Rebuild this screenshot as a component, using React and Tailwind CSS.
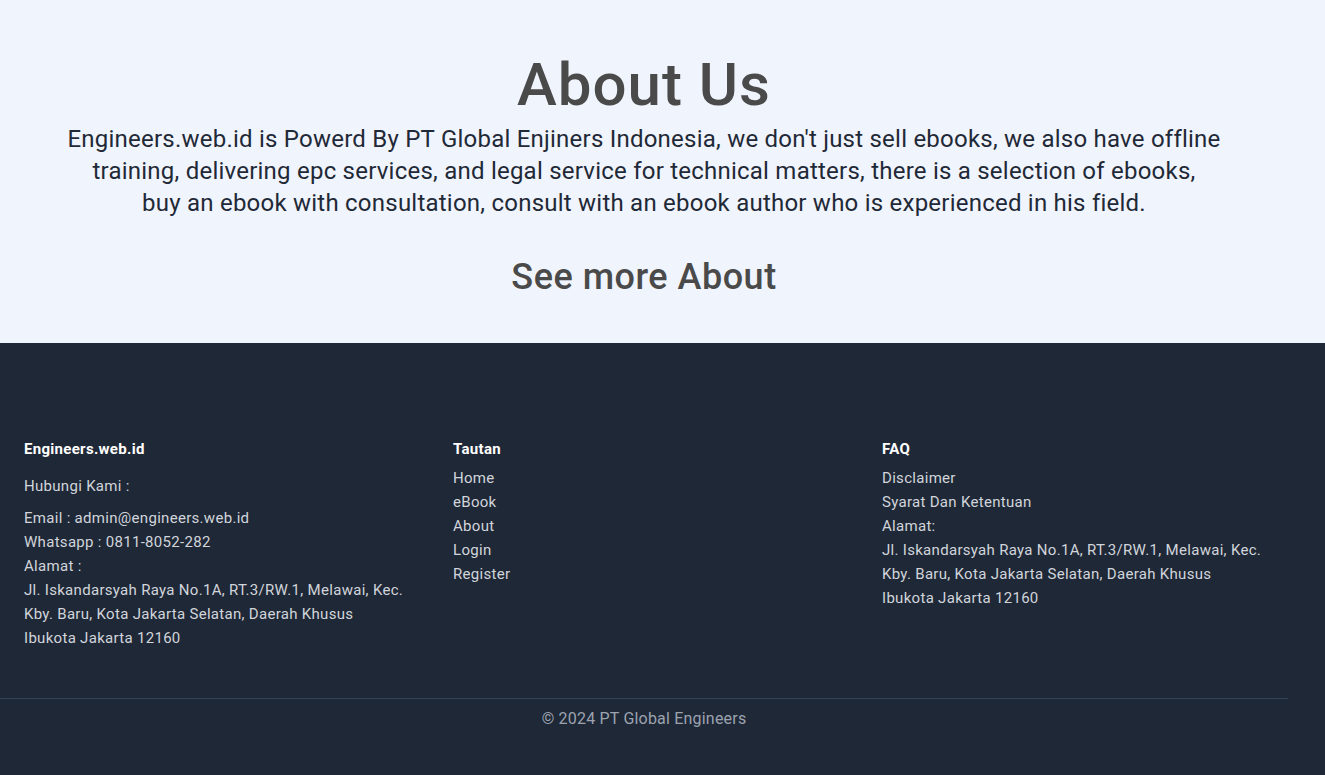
const LINKS = ['Home', 'eBook', 'About', 'Login', 'Register'];

export default function App() {
  return (
    <div className="min-h-screen font-['Roboto','Liberation_Sans',sans-serif]">
      {/* About section */}
      <section className="bg-[#f0f4fc] h-[343px]">
        <div className="w-[1288px] flex flex-col items-center pt-[52px]">
          <h1 className="text-[60px] leading-[66px] font-medium tracking-[1px] text-[#4a4a4a]">About Us</h1>
          <p className="text-center text-2xl leading-8 tracking-[0.23px] text-[#1f2937] mt-[5px]">
            Engineers.web.id is Powerd By PT Global Enjiners Indonesia, we don't just sell ebooks, we also have offline
            <br />
            training, delivering epc services, and legal service for technical matters, there is a selection of ebooks,
            <br />
            buy an ebook with consultation, consult with an ebook author who is experienced in his field.
          </p>
          <a className="mt-[38px] text-4xl leading-10 font-medium tracking-[0.5px] text-[#4a4a4a]">See more About</a>
        </div>
      </section>

      {/* Footer */}
      <footer className="bg-[#1f2837] h-[432px] pt-[94px] text-[15px] leading-6 tracking-[0.3px] text-[#d1d5db]">
        <div className="w-[1288px]">
          <div className="grid grid-cols-[429px_429px_1fr] pl-6 h-[261px]">
            <div>
              <h3 className="font-bold text-white">Engineers.web.id</h3>
              <p className="mt-[13px]">Hubungi Kami :</p>
              <div className="mt-2">
                <p>Email : admin@engineers.web.id</p>
                <p>Whatsapp : 0811-8052-282</p>
                <p>Alamat :</p>
                <p>
                  Jl. Iskandarsyah Raya No.1A, RT.3/RW.1, Melawai, Kec.
                  <br />
                  Kby. Baru, Kota Jakarta Selatan, Daerah Khusus
                  <br />
                  Ibukota Jakarta 12160
                </p>
              </div>
            </div>
            <div>
              <h3 className="font-bold text-white">Tautan</h3>
              <ul className="mt-[5px]">
                {LINKS.map(l => (
                  <li key={l}>{l}</li>
                ))}
              </ul>
            </div>
            <div>
              <h3 className="font-bold text-white">FAQ</h3>
              <div className="mt-[5px]">
                <p>Disclaimer</p>
                <p>Syarat Dan Ketentuan</p>
                <p>Alamat:</p>
                <p>
                  Jl. Iskandarsyah Raya No.1A, RT.3/RW.1, Melawai, Kec.
                  <br />
                  Kby. Baru, Kota Jakarta Selatan, Daerah Khusus
                  <br />
                  Ibukota Jakarta 12160
                </p>
              </div>
            </div>
          </div>
          <div className="border-t border-[#334155] pt-[8px] text-center text-base tracking-[0.2px] text-[#9ca3af]">
            © 2024 PT Global Engineers
          </div>
        </div>
      </footer>
    </div>
  );
}
